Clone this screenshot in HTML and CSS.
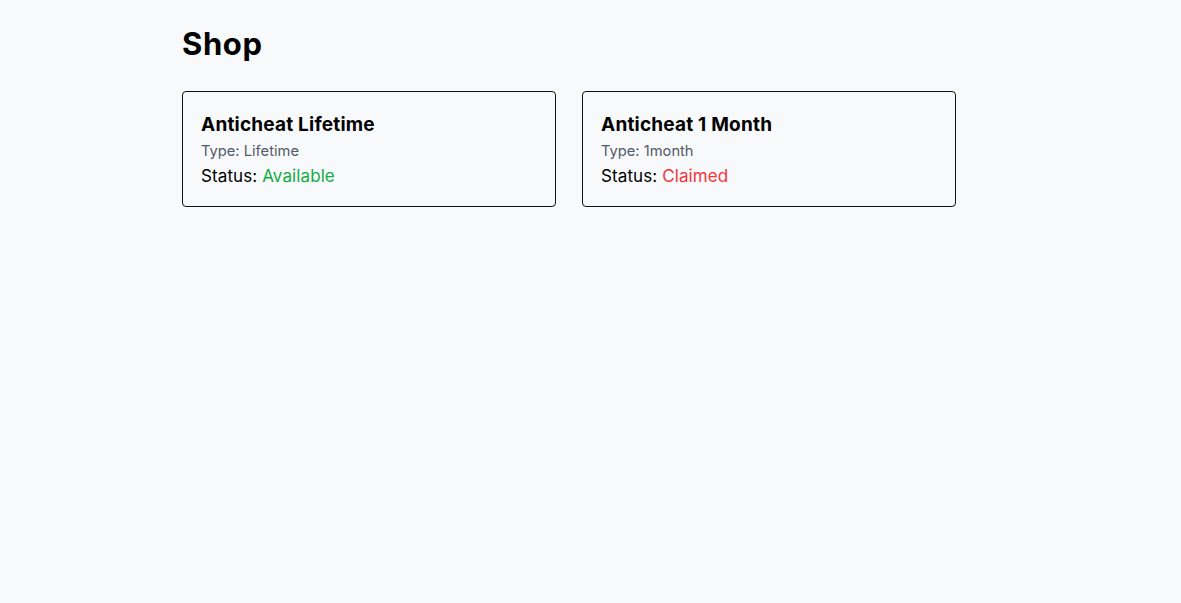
FILE: index.html
```html
<!DOCTYPE html>
<html lang="en">
<head>
<meta charset="utf-8">
<title>Shop</title>
<link rel="stylesheet" href="styles.css">
</head>
<body>
<main class="page">
  <h1 class="page-title">Shop</h1>
  <div class="grid">
    <div class="card">
      <h2 class="card-title">Anticheat Lifetime</h2>
      <p class="card-type">Type: Lifetime</p>
      <p class="card-status">Status: <span class="available">Available</span></p>
    </div>
    <div class="card">
      <h2 class="card-title">Anticheat 1 Month</h2>
      <p class="card-type">Type: 1month</p>
      <p class="card-status">Status: <span class="claimed">Claimed</span></p>
    </div>
  </div>
</main>
</body>
</html>
```
FILE: styles.css
```css
* { box-sizing: border-box; }
html, body { margin: 0; padding: 0; }
body {
  background: #f8f9fb;
  color: #000;
  font-family: Inter, "Noto Sans", sans-serif;
}
.page {
  padding: 24px 0 0 182px;
}
.page-title {
  margin: 0;
  font-size: 31px;
  line-height: 40px;
  font-weight: 700;
  letter-spacing: 0.6px;
}
.grid {
  display: grid;
  grid-template-columns: 374px 374px;
  column-gap: 26px;
  margin-top: 27px;
}
.card {
  border: 1px solid #111;
  border-radius: 4px;
  padding: 19px 18px 18px;
}
.card-title {
  margin: 0;
  font-size: 19px;
  line-height: 28px;
  font-weight: 700;
  letter-spacing: 0.2px;
}
.card-type {
  margin: 2px 0 0;
  font-size: 14.7px;
  line-height: 20px;
  color: #525b68;
}
.card-status {
  margin: 3px 0 0;
  font-size: 17px;
  line-height: 24px;
  letter-spacing: 0.1px;
}
.available { color: #12ad45; }
.claimed { color: #f5333b; }
```
